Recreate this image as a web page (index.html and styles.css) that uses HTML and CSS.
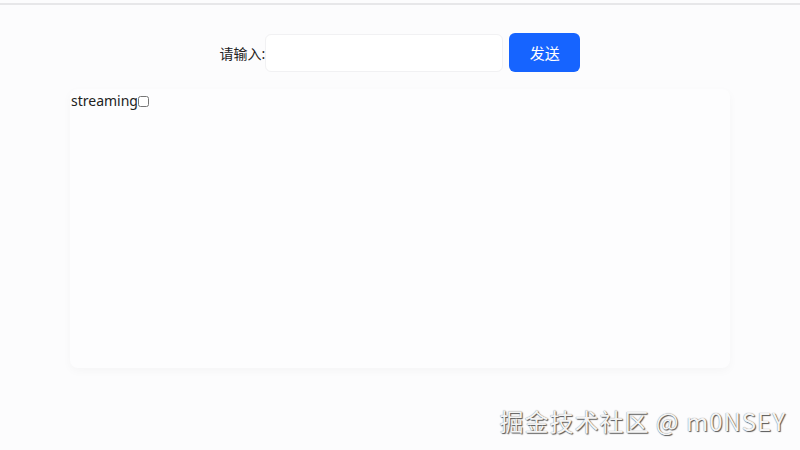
FILE: index.html
```html
<!DOCTYPE html>
<html lang="zh">
<head>
<meta charset="utf-8">
<link rel="stylesheet" href="styles.css">
</head>
<body>
<div class="topline"></div>
<div class="page">
  <div class="form">
    <label class="label" for="q">请输入:</label>
    <input class="input" id="q" type="text">
    <button class="send">发送</button>
  </div>
  <div class="panel">
    <label class="stream">streaming<input class="check" type="checkbox"></label>
  </div>
</div>
<div class="watermark">掘金技术社区 @ m0NSEY</div>
</body>
</html>
```
FILE: styles.css
```css
html, body {
  margin: 0;
  padding: 0;
  height: 100%;
  background: #fcfcfd;
  font-family: "Noto Sans", "Noto Sans CJK SC", sans-serif;
  color: #222;
  overflow: hidden;
}
.topline {
  margin-top: 3px;
  height: 2px;
  background: #e7e7e9;
}
.page {
  padding-top: 28px;
}
.form {
  display: flex;
  justify-content: center;
  align-items: center;
  height: 39px;
}
.label {
  font-size: 14px;
  margin-right: 0;
  color: #222;
}
.input {
  box-sizing: border-box;
  width: 238px;
  height: 38px;
  border: 1px solid #f1f1f3;
  border-radius: 6px;
  background: #fff;
  outline: none;
  margin: 0 6px 0 0;
}
.send {
  box-sizing: border-box;
  width: 71px;
  height: 39px;
  border: none;
  border-radius: 6px;
  background: #1664ff;
  color: #fff;
  font-size: 15px;
  font-family: "Noto Sans CJK SC", sans-serif;
}
.panel {
  margin: 17px 0 0 70px;
  width: 660px;
  height: 279px;
  border-radius: 8px;
  background: #fdfdfe;
  box-shadow: 0 3px 10px rgba(0, 0, 0, 0.03);
}
.stream {
  display: inline-flex;
  align-items: center;
  font-size: 14px;
  color: #222;
  padding: 1px 0 0 1px;
  line-height: 20px;
}
.check {
  margin: 0;
  width: 11px;
  height: 11px;
}
.watermark {
  position: absolute;
  right: 14px;
  bottom: 12px;
  font-family: "Noto Sans CJK SC", sans-serif;
  font-size: 24px;
  letter-spacing: 1px;
  color: #f4f4f4;
  text-shadow: 1px 1px 1px #555, 0 0 1px #777;
}
```
